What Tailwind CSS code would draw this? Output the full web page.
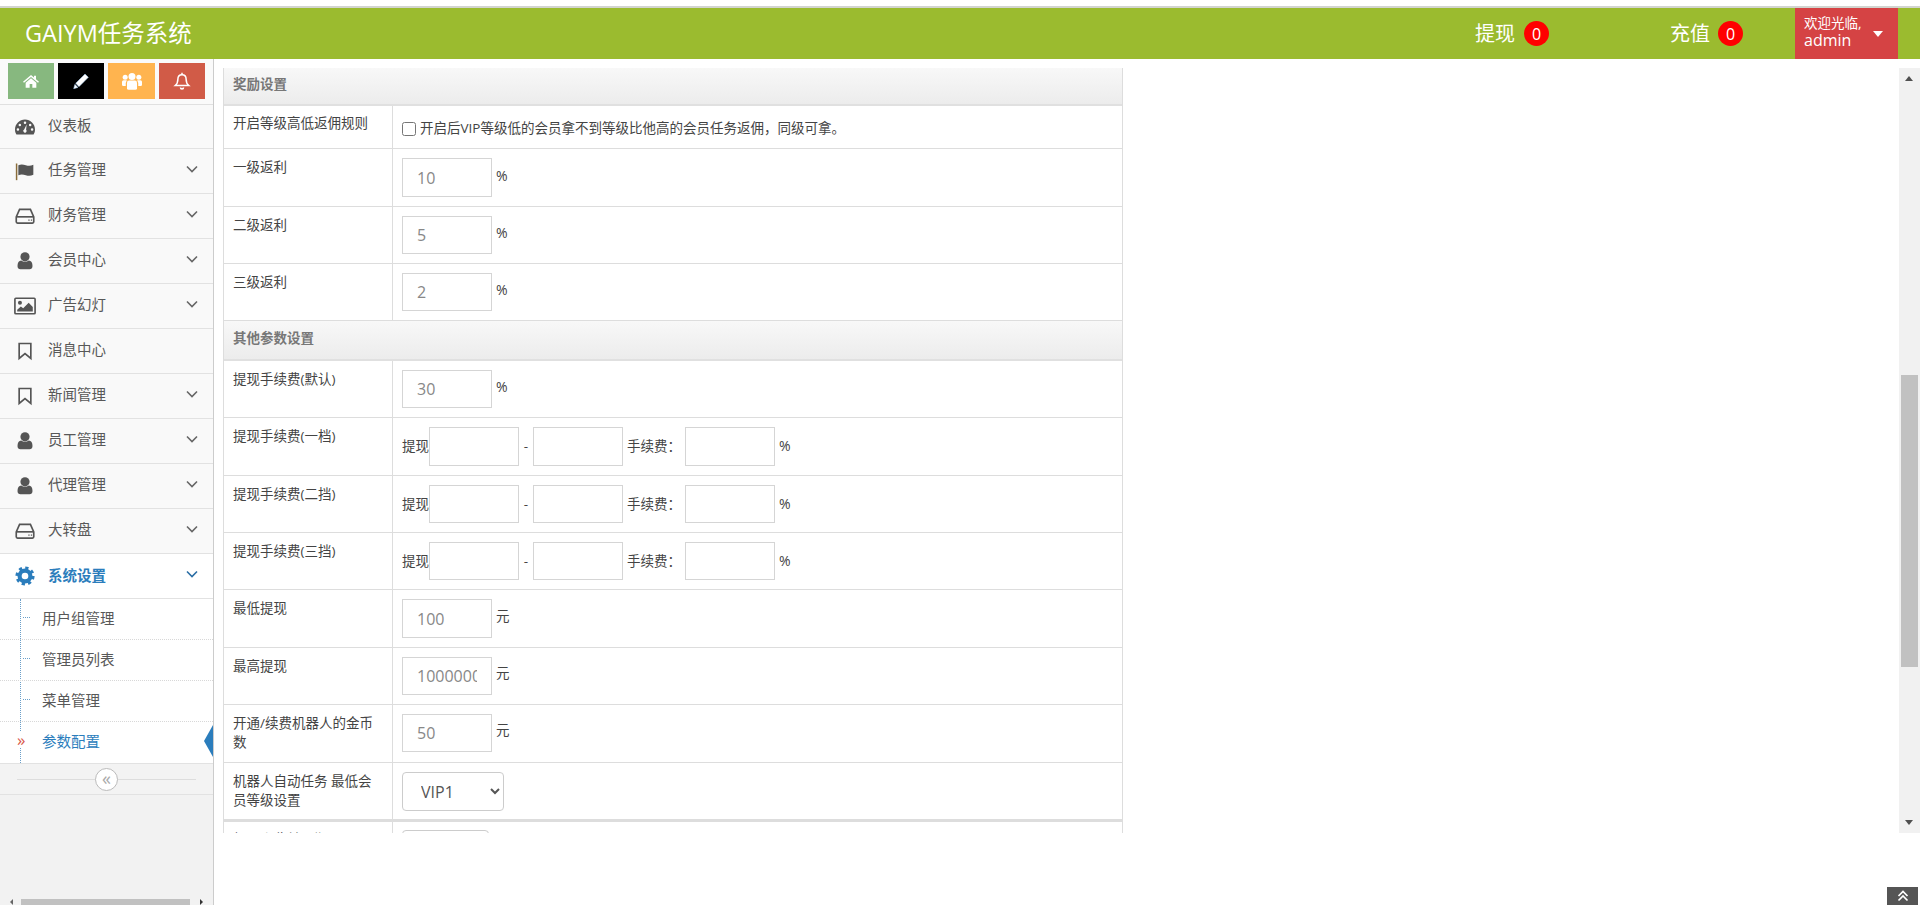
<!DOCTYPE html>
<html lang="zh-CN">
<head>
<meta charset="utf-8">
<title>GAIYM任务系统</title>
<script src="https://cdn.jsdelivr.net/npm/@tailwindcss/browser@4"></script>
</head>
<body class="h-[905px] w-[1920px] overflow-hidden bg-white font-[family-name:'Open_Sans','Noto_Sans_CJK_SC',sans-serif] text-[#333]">
<div class="relative flex h-[905px] flex-col pt-[6px]">
  <!-- top bar -->
  <header class="flex h-[53px] shrink-0 items-center border-t-2 border-[#d2d4cf] bg-[#9bbb2f] text-white">
    <div class="ml-[25px] text-[23.5px]">GAIYM任务系统</div>
    <div class="ml-auto flex items-center">
      <span class="text-[20px]">提现</span>
      <span class="ml-[9px] flex h-[25px] w-[25px] items-center justify-center rounded-full bg-[#ff0000] text-[16px]">0</span>
    </div>
    <div class="ml-[121px] flex items-center">
      <span class="text-[20px]">充值</span>
      <span class="ml-[8px] flex h-[25px] w-[25px] items-center justify-center rounded-full bg-[#ff0000] text-[16px]">0</span>
    </div>
    <div class="ml-[52px] mr-[22px] flex h-[51px] w-[103px] items-center bg-[#d54344] pl-[9px]">
      <div class="-mt-[3px] flex flex-col">
        <span class="text-[13.5px] leading-[16px]">欢迎光临,</span>
        <span class="text-[16px] leading-[19px]">admin</span>
      </div>
      <span class="ml-auto mr-[15px] h-0 w-0 border-x-[5.5px] border-t-[6px] border-x-transparent border-t-white"></span>
    </div>
  </header>

  <div class="flex min-h-0 flex-1">
    <!-- sidebar -->
    <aside class="relative flex w-[214px] shrink-0 flex-col border-r border-[#cccccc] bg-[#f2f2f2] text-[14.5px] text-[#585858]">
      <div class="flex h-[46px] shrink-0 gap-[4px] border-b border-[#e0e0e0] bg-[#fafafa] pl-[8px] pt-[4px]">
        <span class="flex h-[36px] w-[46px] items-center justify-center bg-[#87b87f]">
          <svg class="h-[16px] w-[16px]" viewBox="0 0 24 24" fill="#fff"><path d="M12 3 0 13l1.500 1.800L12 6l10.500 8.800L24 13l-4.500-3.800V4h-3v2.700z"/><path d="M12 8 4 14.600V22h6v-5.500h4V22h6v-7.400z"/></svg>
        </span>
        <span class="flex h-[36px] w-[46px] items-center justify-center bg-black">
          <svg class="h-[16px] w-[16px]" viewBox="0 0 24 24" fill="#fff" stroke="#9cc4ea" stroke-width=".8"><path d="M18 1.500 23 6.500 9 20.500 4 15.500z"/><path d="M2.800 17 7.500 21.700 1 23.500z"/></svg>
        </span>
        <span class="flex h-[36px] w-[47px] items-center justify-center bg-[#ffb44f]">
          <svg class="h-[20px] w-[20px]" viewBox="0 0 24 24" fill="#fff"><circle cx="12" cy="6.500" r="4.200"/><circle cx="3.800" cy="7.500" r="3"/><circle cx="20.200" cy="7.500" r="3"/><path d="M6 14q0-2.500 2.500-2.500h7q2.500 0 2.500 2.500v7q0 1.500-2 1.500H8q-2 0-2-1.500z"/><path d="M0 13q0-2 2-2h3q.5 .5 1 .7-1.500 1-1.500 3V18H1.500Q0 18 0 16.500z"/><path d="M24 13q0-2-2-2h-3q-.5 .5-1 .7 1.500 1 1.500 3V18h3q1.500 0 1.500-1.500z"/></svg>
        </span>
        <span class="flex h-[36px] w-[46px] items-center justify-center bg-[#d15b47]">
          <svg class="h-[18px] w-[18px]" viewBox="0 0 24 24" fill="none" stroke="#fff" stroke-width="2"><path d="M12 3.500c-3.800 0-5.500 2.800-5.500 6 0 4.500-1.200 6.500-3.500 8.500h18c-2.300-2-3.500-4-3.500-8.500 0-3.200-1.700-6-5.500-6z"/><path d="M10 20.500a2 2 0 0 0 4 0" stroke-width="2.200"/><path d="M12 1v2.500"/></svg>
        </span>
      </div>

      <nav class="flex flex-col bg-[#f9f9f9]">
        <a class="flex h-[44px] shrink-0 items-center border-b border-[#e2e2e2] pl-[15px]">
          <svg class="h-[20px] w-[20px]" viewBox="0 0 24 24" fill="#555"><path fill-rule="evenodd" d="M12 3C5.400 3 0 8.400 0 15c0 2.300.6 4.200 1.700 6h20.600c1.100-1.800 1.700-3.700 1.700-6 0-6.600-5.400-12-12-12zM12 5.500a1.500 1.500 0 1 1 0 3 1.500 1.500 0 0 1 0-3zM5.800 8a1.500 1.500 0 1 1 0 3 1.500 1.500 0 0 1 0-3zM18.200 8a1.500 1.500 0 1 1 0 3 1.500 1.500 0 0 1 0-3zM3.500 13.500a1.500 1.500 0 1 1 0 3 1.500 1.500 0 0 1 0-3zM20.500 13.500a1.500 1.500 0 1 1 0 3 1.500 1.500 0 0 1 0-3zM14 9l-.7 6.200a2 2 0 1 1-2.300-.3z"/></svg>
          <span class="-mt-[2px] ml-[13px]">仪表板</span>
        </a>
        <a class="flex h-[45px] shrink-0 items-center border-b border-[#e2e2e2] pl-[15px] pr-[15px]">
          <svg class="h-[20px] w-[20px]" viewBox="0 0 24 24" fill="#555"><rect x="1" y="3" width="1.800" height="20" fill="#8a6d3b"/><path d="M4 5c3-1.500 6-1 9 0s6 1 9-.5v12c-3 1.500-6 1.500-9 .5s-6-1.500-9 0z"/></svg>
          <span class="-mt-[2px] ml-[13px]">任务管理</span>
          <svg class="ml-auto -mt-[4px] h-[8px] w-[12px]" viewBox="0 0 12 8" fill="none" stroke="#666" stroke-width="1.600"><path d="M1 1.500l5 5 5-5"/></svg>
        </a>
        <a class="flex h-[45px] shrink-0 items-center border-b border-[#e2e2e2] pl-[15px] pr-[15px]">
          <svg class="h-[20px] w-[20px]" viewBox="0 0 24 24" fill="none" stroke="#555" stroke-width="2"><path d="M5.500 4h13l4 9v6q0 1.500-1.500 1.500H3q-1.500 0-1.500-1.500v-6z"/><path d="M2 13h20"/><path d="M16 16.800h1.500M19 16.800h1.500" stroke-width="1.500"/></svg>
          <span class="-mt-[2px] ml-[13px]">财务管理</span>
          <svg class="ml-auto -mt-[4px] h-[8px] w-[12px]" viewBox="0 0 12 8" fill="none" stroke="#666" stroke-width="1.600"><path d="M1 1.500l5 5 5-5"/></svg>
        </a>
        <a class="flex h-[45px] shrink-0 items-center border-b border-[#e2e2e2] pl-[15px] pr-[15px]">
          <svg class="h-[20px] w-[20px]" viewBox="0 0 24 24" fill="#555"><circle cx="12" cy="7" r="5.500"/><path d="M3 18c0-4 1.500-6 4.500-6.500 1.300 1 2.800 1.500 4.500 1.500s3.200-.5 4.500-1.500c3 .5 4.500 2.500 4.500 6.500 0 2.500-1.500 4-3.500 4h-11C4.500 22 3 20.500 3 18z"/></svg>
          <span class="-mt-[2px] ml-[13px]">会员中心</span>
          <svg class="ml-auto -mt-[4px] h-[8px] w-[12px]" viewBox="0 0 12 8" fill="none" stroke="#666" stroke-width="1.600"><path d="M1 1.500l5 5 5-5"/></svg>
        </a>
        <a class="flex h-[45px] shrink-0 items-center border-b border-[#e2e2e2] pl-[14px] pr-[15px]">
          <svg class="h-[22px] w-[22px]" viewBox="0 0 24 24" fill="#555"><rect x="1" y="3.500" width="22" height="17" rx="1" fill="none" stroke="#555" stroke-width="1.800"/><circle cx="6.500" cy="8.500" r="2.200"/><path d="M3.500 18v-2l4-3.500 2.500 2 6-6 4.500 4.500v5z"/></svg>
          <span class="-mt-[2px] ml-[12px]">广告幻灯</span>
          <svg class="ml-auto -mt-[4px] h-[8px] w-[12px]" viewBox="0 0 12 8" fill="none" stroke="#666" stroke-width="1.600"><path d="M1 1.500l5 5 5-5"/></svg>
        </a>
        <a class="flex h-[45px] shrink-0 items-center border-b border-[#e2e2e2] pl-[15px]">
          <svg class="h-[20px] w-[20px]" viewBox="0 0 24 24" fill="none" stroke="#555" stroke-width="2"><path d="M5 3h14v18l-7-6-7 6z"/></svg>
          <span class="-mt-[2px] ml-[13px]">消息中心</span>
        </a>
        <a class="flex h-[45px] shrink-0 items-center border-b border-[#e2e2e2] pl-[15px] pr-[15px]">
          <svg class="h-[20px] w-[20px]" viewBox="0 0 24 24" fill="none" stroke="#555" stroke-width="2"><path d="M5 3h14v18l-7-6-7 6z"/></svg>
          <span class="-mt-[2px] ml-[13px]">新闻管理</span>
          <svg class="ml-auto -mt-[4px] h-[8px] w-[12px]" viewBox="0 0 12 8" fill="none" stroke="#666" stroke-width="1.600"><path d="M1 1.500l5 5 5-5"/></svg>
        </a>
        <a class="flex h-[45px] shrink-0 items-center border-b border-[#e2e2e2] pl-[15px] pr-[15px]">
          <svg class="h-[20px] w-[20px]" viewBox="0 0 24 24" fill="#555"><circle cx="12" cy="7" r="5.500"/><path d="M3 18c0-4 1.500-6 4.500-6.500 1.300 1 2.800 1.500 4.500 1.500s3.200-.5 4.500-1.500c3 .5 4.500 2.500 4.500 6.500 0 2.500-1.500 4-3.500 4h-11C4.500 22 3 20.500 3 18z"/></svg>
          <span class="-mt-[2px] ml-[13px]">员工管理</span>
          <svg class="ml-auto -mt-[4px] h-[8px] w-[12px]" viewBox="0 0 12 8" fill="none" stroke="#666" stroke-width="1.600"><path d="M1 1.500l5 5 5-5"/></svg>
        </a>
        <a class="flex h-[45px] shrink-0 items-center border-b border-[#e2e2e2] pl-[15px] pr-[15px]">
          <svg class="h-[20px] w-[20px]" viewBox="0 0 24 24" fill="#555"><circle cx="12" cy="7" r="5.500"/><path d="M3 18c0-4 1.500-6 4.500-6.500 1.300 1 2.800 1.500 4.500 1.500s3.200-.5 4.500-1.500c3 .5 4.500 2.500 4.500 6.500 0 2.500-1.500 4-3.500 4h-11C4.500 22 3 20.500 3 18z"/></svg>
          <span class="-mt-[2px] ml-[13px]">代理管理</span>
          <svg class="ml-auto -mt-[4px] h-[8px] w-[12px]" viewBox="0 0 12 8" fill="none" stroke="#666" stroke-width="1.600"><path d="M1 1.500l5 5 5-5"/></svg>
        </a>
        <a class="flex h-[45px] shrink-0 items-center border-b border-[#e2e2e2] pl-[15px] pr-[15px]">
          <svg class="h-[20px] w-[20px]" viewBox="0 0 24 24" fill="none" stroke="#555" stroke-width="2"><path d="M5.500 4h13l4 9v6q0 1.500-1.500 1.500H3q-1.500 0-1.500-1.500v-6z"/><path d="M2 13h20"/><path d="M16 16.800h1.500M19 16.800h1.500" stroke-width="1.500"/></svg>
          <span class="-mt-[2px] ml-[13px]">大转盘</span>
          <svg class="ml-auto -mt-[4px] h-[8px] w-[12px]" viewBox="0 0 12 8" fill="none" stroke="#666" stroke-width="1.600"><path d="M1 1.500l5 5 5-5"/></svg>
        </a>
        <a class="flex h-[45px] shrink-0 items-center border-b border-[#e2e2e2] bg-white pl-[15px] pr-[15px] font-bold text-[#2b7dbc]">
          <svg class="h-[20px] w-[20px]" viewBox="0 0 24 24" fill="none" stroke="#2b7dbc"><circle cx="12" cy="12" r="6.500" stroke-width="5"/><circle cx="12" cy="12" r="9.500" stroke-width="4" stroke-dasharray="3.730 3.730"/></svg>
          <span class="-mt-[1px] ml-[13px]">系统设置</span>
          <svg class="ml-auto -mt-[4px] h-[8px] w-[12px]" viewBox="0 0 12 8" fill="none" stroke="#2b6ea5" stroke-width="1.600"><path d="M1 1.500l5 5 5-5"/></svg>
        </a>
      </nav>

      <!-- submenu -->
      <div class="relative flex flex-col bg-white text-[14.5px]">
        <span class="absolute bottom-0 left-[20px] top-0 border-l border-dotted border-[#6a9fc9]"></span>
        <a class="relative flex h-[41px] items-center border-b border-dotted border-[#d8d8d8] pl-[42px]">
          <span class="absolute left-[23px] top-[18px] w-[7px] border-t border-dotted border-[#6a9fc9]"></span>用户组管理
        </a>
        <a class="relative flex h-[41px] items-center border-b border-dotted border-[#d8d8d8] pl-[42px]">
          <span class="absolute left-[23px] top-[18px] w-[7px] border-t border-dotted border-[#6a9fc9]"></span>管理员列表
        </a>
        <a class="relative flex h-[41px] items-center border-b border-dotted border-[#d8d8d8] pl-[42px]">
          <span class="absolute left-[23px] top-[18px] w-[7px] border-t border-dotted border-[#6a9fc9]"></span>菜单管理
        </a>
        <a class="relative flex h-[41px] items-center pb-[2px] pl-[42px] text-[#2b7dbc]">
          <span class="absolute left-[17px] top-[10px] bg-white text-[17px] leading-[16px] text-[#d9594a]">»</span>参数配置
          <span class="absolute right-0 top-[3px] h-0 w-0 border-y-[16px] border-r-[9px] border-y-transparent border-r-[#2b7dbc]"></span>
        </a>
      </div>

      <!-- collapse -->
      <div class="relative flex h-[32px] shrink-0 items-center justify-center border-y border-[#e2e2e2] bg-[#f3f3f3]">
        <span class="absolute left-[17px] right-[17px] top-[15px] border-t border-[#dddddd]"></span>
        <span class="relative flex h-[23px] w-[23px] items-center justify-center rounded-full border border-[#bbbbbb] bg-white pb-[2px] text-[18px] leading-[18px] text-[#aaaaaa]">«</span>
      </div>

      <!-- horizontal scrollbar of the side menu -->
      <div class="mt-auto flex h-[6px] items-center">
        <span class="ml-[10px] h-0 w-0 border-y-[3px] border-r-[3px] border-y-transparent border-r-[#666]"></span>
        <span class="ml-[8px] h-[6px] w-[169px] bg-[#c1c1c1]"></span>
        <span class="ml-[10px] h-0 w-0 border-y-[3px] border-l-[3px] border-y-transparent border-l-[#333]"></span>
      </div>
    </aside>

    <!-- main -->
    <main class="min-w-0 flex-1 bg-white pt-[9px]">
      <div class="flex h-[765px]">
        <div class="min-w-0 flex-1 overflow-hidden pl-[9px]">
          <div class="w-[900px] border-x border-[#dddddd] text-[13.5px] leading-[19px] text-[#444]">
            <div class="flex h-[38px] items-center border-b-2 border-[#e0e0e0] bg-gradient-to-b from-[#f8f8f8] to-[#ececec] pb-[3px] pl-[9px] font-semibold text-[#777]">奖励设置</div>

            <div class="flex h-[43px] border-b border-[#dddddd]">
              <div class="w-[169px] shrink-0 border-r border-[#dddddd] px-[9px] pt-[8px]">开启等级高低返佣规则</div>
              <div class="flex items-center pl-[9px] pt-[3px] text-[13.5px]">
                <input type="checkbox" class="h-[14px] w-[14px]">
                <span class="ml-[4px]">开启后VIP等级低的会员拿不到等级比他高的会员任务返佣，同级可拿。</span>
              </div>
            </div>
            <div class="flex h-[58px] border-b border-[#dddddd]">
              <div class="w-[169px] shrink-0 border-r border-[#dddddd] px-[9px] pt-[9px]">一级返利</div>
              <div class="flex items-start pl-[9px] pt-[9px]">
                <input value="10" class="h-[39px] w-[90px] border border-[#d5d5d5] px-[14px] text-[16px] text-[#888]">
                <span class="ml-[4px] mt-[8px] text-[14px]">%</span>
              </div>
            </div>
            <div class="flex h-[57px] border-b border-[#dddddd]">
              <div class="w-[169px] shrink-0 border-r border-[#dddddd] px-[9px] pt-[9px]">二级返利</div>
              <div class="flex items-start pl-[9px] pt-[9px]">
                <input value="5" class="h-[38px] w-[90px] border border-[#d5d5d5] px-[14px] text-[16px] text-[#888]">
                <span class="ml-[4px] mt-[7px] text-[14px]">%</span>
              </div>
            </div>
            <div class="flex h-[57px] border-b border-[#dddddd]">
              <div class="w-[169px] shrink-0 border-r border-[#dddddd] px-[9px] pt-[9px]">三级返利</div>
              <div class="flex items-start pl-[9px] pt-[9px]">
                <input value="2" class="h-[38px] w-[90px] border border-[#d5d5d5] px-[14px] text-[16px] text-[#888]">
                <span class="ml-[4px] mt-[7px] text-[14px]">%</span>
              </div>
            </div>

            <div class="flex h-[40px] items-center border-b-2 border-[#e0e0e0] bg-gradient-to-b from-[#f8f8f8] to-[#ececec] pb-[3px] pl-[9px] font-semibold text-[#777]">其他参数设置</div>

            <div class="flex h-[57px] border-b border-[#dddddd]">
              <div class="w-[169px] shrink-0 border-r border-[#dddddd] px-[9px] pt-[9px]">提现手续费(默认)</div>
              <div class="flex items-start pl-[9px] pt-[9px]">
                <input value="30" class="h-[38px] w-[90px] border border-[#d5d5d5] px-[14px] text-[16px] text-[#888]">
                <span class="ml-[4px] mt-[7px] text-[14px]">%</span>
              </div>
            </div>
            <div class="flex h-[58px] border-b border-[#dddddd]">
              <div class="w-[169px] shrink-0 border-r border-[#dddddd] px-[9px] pt-[9px]">提现手续费(一档)</div>
              <div class="flex items-start pl-[9px] pt-[9px]">
                <span class="mt-[10px] w-[27px]">提现</span>
                <input class="h-[39px] w-[90px] border border-[#d5d5d5]">
                <span class="mt-[10px] w-[14px] text-center">-</span>
                <input class="h-[39px] w-[90px] border border-[#d5d5d5]">
                <span class="ml-[4px] mt-[10px] w-[58px]">手续费：</span>
                <input class="h-[39px] w-[90px] border border-[#d5d5d5]">
                <span class="ml-[4px] mt-[9px] text-[14px]">%</span>
              </div>
            </div>
            <div class="flex h-[57px] border-b border-[#dddddd]">
              <div class="w-[169px] shrink-0 border-r border-[#dddddd] px-[9px] pt-[9px]">提现手续费(二挡)</div>
              <div class="flex items-start pl-[9px] pt-[9px]">
                <span class="mt-[10px] w-[27px]">提现</span>
                <input class="h-[38px] w-[90px] border border-[#d5d5d5]">
                <span class="mt-[10px] w-[14px] text-center">-</span>
                <input class="h-[38px] w-[90px] border border-[#d5d5d5]">
                <span class="ml-[4px] mt-[10px] w-[58px]">手续费：</span>
                <input class="h-[38px] w-[90px] border border-[#d5d5d5]">
                <span class="ml-[4px] mt-[9px] text-[14px]">%</span>
              </div>
            </div>
            <div class="flex h-[57px] border-b border-[#dddddd]">
              <div class="w-[169px] shrink-0 border-r border-[#dddddd] px-[9px] pt-[9px]">提现手续费(三挡)</div>
              <div class="flex items-start pl-[9px] pt-[9px]">
                <span class="mt-[10px] w-[27px]">提现</span>
                <input class="h-[38px] w-[90px] border border-[#d5d5d5]">
                <span class="mt-[10px] w-[14px] text-center">-</span>
                <input class="h-[38px] w-[90px] border border-[#d5d5d5]">
                <span class="ml-[4px] mt-[10px] w-[58px]">手续费：</span>
                <input class="h-[38px] w-[90px] border border-[#d5d5d5]">
                <span class="ml-[4px] mt-[9px] text-[14px]">%</span>
              </div>
            </div>
            <div class="flex h-[58px] border-b border-[#dddddd]">
              <div class="w-[169px] shrink-0 border-r border-[#dddddd] px-[9px] pt-[9px]">最低提现</div>
              <div class="flex items-start pl-[9px] pt-[9px]">
                <input value="100" class="h-[39px] w-[90px] border border-[#d5d5d5] px-[14px] text-[16px] text-[#888]">
                <span class="ml-[4px] mt-[8px]">元</span>
              </div>
            </div>
            <div class="flex h-[57px] border-b border-[#dddddd]">
              <div class="w-[169px] shrink-0 border-r border-[#dddddd] px-[9px] pt-[9px]">最高提现</div>
              <div class="flex items-start pl-[9px] pt-[9px]">
                <input value="1000000" class="h-[38px] w-[90px] border border-[#d5d5d5] px-[14px] text-[16px] text-[#888]">
                <span class="ml-[4px] mt-[7px]">元</span>
              </div>
            </div>
            <div class="flex h-[58px] border-b border-[#dddddd]">
              <div class="w-[169px] shrink-0 border-r border-[#dddddd] px-[9px] pt-[9px]">开通/续费机器人的金币数</div>
              <div class="flex items-start pl-[9px] pt-[9px]">
                <input value="50" class="h-[38px] w-[90px] border border-[#d5d5d5] px-[14px] text-[16px] text-[#888]">
                <span class="ml-[4px] mt-[7px]">元</span>
              </div>
            </div>
            <div class="flex h-[59px] border-b-[3px] border-[#dddddd]">
              <div class="w-[169px] shrink-0 border-r border-[#dddddd] px-[9px] pt-[9px]">机器人自动任务 最低会员等级设置</div>
              <div class="flex items-start pl-[9px] pt-[9px]">
                <select class="h-[39px] w-[102px] rounded-[4px] border border-[#cccccc] pl-[14px] pr-[4px] text-[16px] text-[#555]"><option>VIP1</option></select>
              </div>
            </div>
            <div class="flex h-[58px]">
              <!-- Only the top pixel row of this label is visible in the reference, so its wording is a guess. -->
              <div class="w-[169px] shrink-0 border-r border-[#dddddd] px-[9px] pt-[8px]">机器人收益周期</div>
              <div class="flex items-start pl-[9px] pt-[8px]">
                <select class="h-[39px] w-[87px] rounded-[4px] border border-[#cccccc]"></select>
              </div>
            </div>
          </div>
        </div>
        <!-- page scrollbar -->
        <div class="relative w-[21px] shrink-0 bg-[#f1f1f1]">
          <span class="absolute left-[6px] top-[8px] h-0 w-0 border-x-[4.5px] border-b-[5px] border-x-transparent border-b-[#505050]"></span>
          <span class="absolute left-[2px] top-[307px] h-[292px] w-[17px] bg-[#c1c1c1]"></span>
          <span class="absolute bottom-[8px] left-[6px] h-0 w-0 border-x-[4.5px] border-t-[5px] border-x-transparent border-t-[#505050]"></span>
        </div>
      </div>
    </main>
  </div>

  <!-- back to top -->
  <a class="absolute bottom-0 right-[2px] flex h-[18px] w-[31px] items-center justify-center bg-[#555555]">
    <svg class="h-[12px] w-[12px]" viewBox="0 0 12 12" fill="none" stroke="#fff" stroke-width="1.700"><path d="M1.500 6 6 1.500 10.500 6M1.500 10.500 6 6l4.500 4.500"/></svg>
  </a>
</div>
</body>
</html>
